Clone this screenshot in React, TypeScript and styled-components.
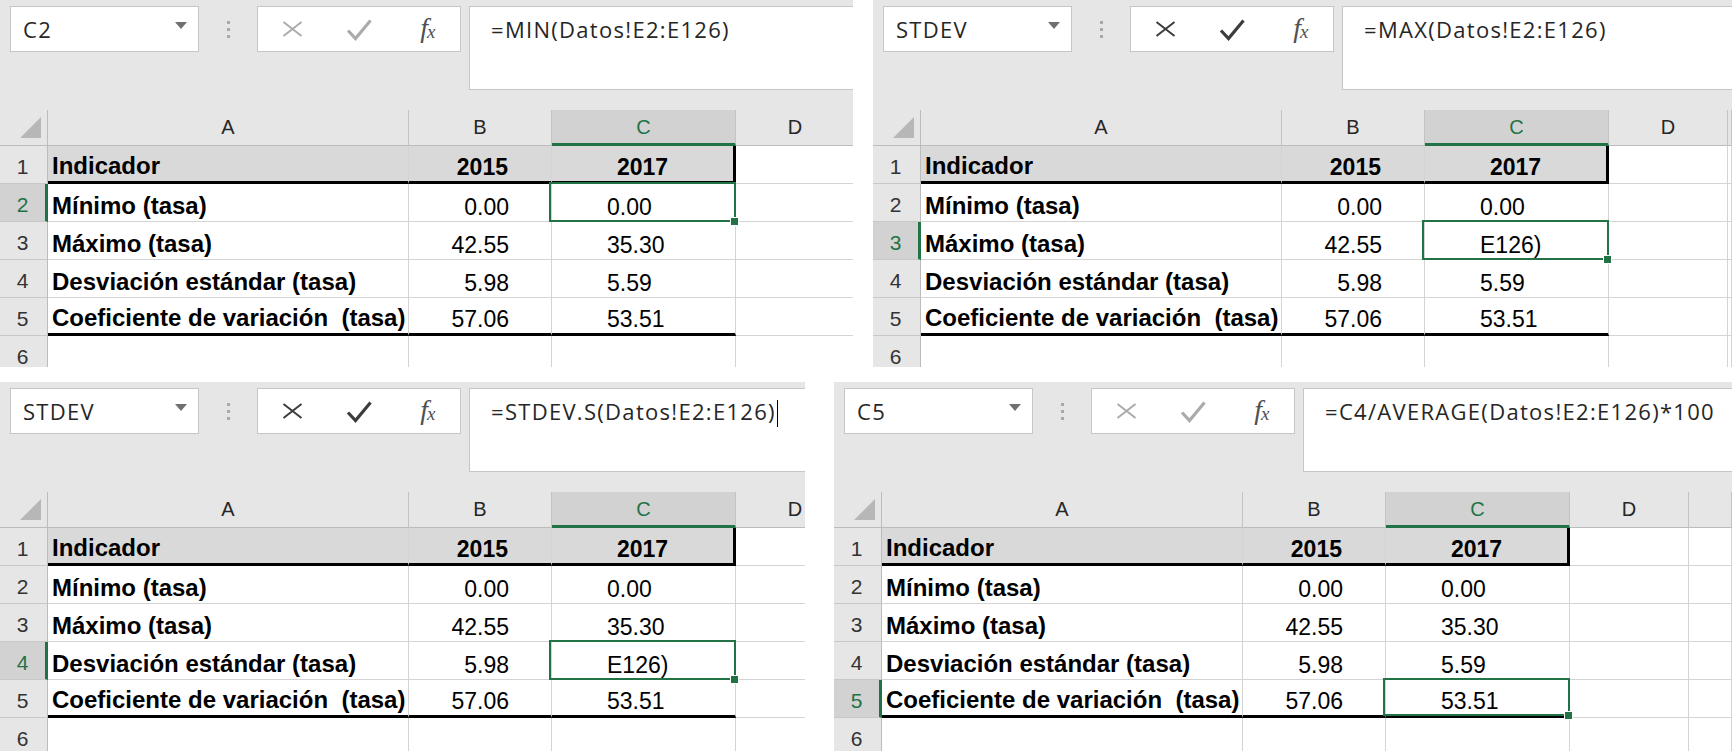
import React from 'react';
import styled, { createGlobalStyle } from 'styled-components';

const GREEN = '#217346';

const GlobalStyle = createGlobalStyle`
  html, body { margin: 0; padding: 0; background: #ffffff; }
  body { width: 1732px; height: 751px; overflow: hidden; font-family: "Liberation Sans", Arial, sans-serif; }
  * { box-sizing: border-box; }
`;

const Page = styled.div`
  display: flex;
  flex-direction: column;
  gap: 15px;
  width: 1732px;
  height: 751px;
  background: #fff;
`;

const PanelRow = styled.div<{ $height: number; $gap: number }>`
  display: flex;
  gap: ${(p) => p.$gap}px;
  height: ${(p) => p.$height}px;
  flex: none;
`;

const Panel = styled.section<{ $width?: number }>`
  ${(p) => (p.$width ? `width: ${p.$width}px; flex: none;` : 'flex: 1; min-width: 0;')}
  height: 100%;
  overflow: hidden;
  background: #e6e6e6;
  display: flex;
  flex-direction: column;
`;

/* ---------- formula bar ---------- */

const Toolbar = styled.div`
  display: flex;
  align-items: flex-start;
  height: 110px;
  flex: none;
  padding: 6px 0 20px 10px;
  font-family: "Open Sans", "Noto Sans", sans-serif;
  font-size: 22px;
  letter-spacing: 1.3px;
  color: #262626;
`;

const NameBox = styled.div`
  width: 189px;
  height: 46px;
  flex: none;
  background: #fff;
  border: 1px solid #c6c6c6;
  display: flex;
  align-items: center;
  justify-content: space-between;
  padding: 0 11px 1px 12px;
  white-space: nowrap;
`;

const DropArrow = styled.span`
  width: 0;
  height: 0;
  border-left: 6px solid transparent;
  border-right: 6px solid transparent;
  border-top: 7px solid #707070;
  margin-bottom: 6px;
`;

const Grip = styled.div`
  width: 58px;
  flex: none;
  display: flex;
  flex-direction: column;
  align-items: center;
  gap: 4px;
  padding-top: 15px;
`;

const GripDot = styled.span`
  width: 3px;
  height: 3px;
  background: #a9a9a9;
`;

const ButtonBox = styled.div`
  width: 204px;
  height: 46px;
  flex: none;
  background: #fff;
  border: 1px solid #c6c6c6;
  display: grid;
  grid-template-columns: repeat(3, 1fr);
  align-items: center;
  justify-items: center;
`;

const FxGlyph = styled.span`
  font-family: "Liberation Serif", "DejaVu Serif", serif;
  font-style: italic;
  font-size: 28px;
  letter-spacing: -1px;
  color: #505050;
  line-height: 1;
  margin-left: 2px;
  margin-top: -2px;
  & > span {
    font-size: 19px;
    vertical-align: -1px;
  }
`;

const FormulaBox = styled.div`
  flex: 1;
  min-width: 0;
  height: 84px;
  margin-left: 8px;
  background: #fff;
  border: 1px solid #c6c6c6;
  border-right: none;
  padding: 7px 0 0 21px;
  white-space: pre;
  overflow: hidden;
`;

const Caret = styled.span`
  display: inline-block;
  width: 1px;
  height: 27px;
  background: #000;
  vertical-align: -7px;
  margin-left: 1px;
`;

/* ---------- sheet ---------- */

const Sheet = styled.div`
  display: grid;
  grid-template-columns: 48px 361px 143px 184px 119px minmax(0, 1fr);
  grid-template-rows: 36px repeat(6, 38px);
  background: #fff;
  font-family: "Liberation Sans", Arial, sans-serif;
  color: #000;
`;

const Corner = styled.div`
  background: #e6e6e6;
  border-right: 1px solid #bcbcbc;
  border-bottom: 1px solid #bcbcbc;
  display: flex;
  justify-content: flex-end;
  align-items: flex-end;
  padding: 0 6px 7px 0;
`;

const ColHead = styled.div<{ $selected?: boolean }>`
  background: ${(p) => (p.$selected ? '#d2d2d2' : '#e6e6e6')};
  color: ${(p) => (p.$selected ? GREEN : '#262626')};
  border-right: 1px solid #c3c3c3;
  border-bottom: ${(p) => (p.$selected ? `3px solid ${GREEN}` : '1px solid #bcbcbc')};
  display: flex;
  align-items: center;
  justify-content: center;
  font-size: 20px;
  padding-top: ${(p) => (p.$selected ? '2px' : '0')};
  overflow: hidden;
`;

const RowHead = styled.div<{ $selected?: boolean }>`
  background: ${(p) => (p.$selected ? '#d2d2d2' : '#e6e6e6')};
  color: ${(p) => (p.$selected ? GREEN : '#333')};
  border-bottom: 1px solid #c8c8c8;
  border-right: ${(p) => (p.$selected ? `3px solid ${GREEN}` : '1px solid #bcbcbc')};
  display: flex;
  align-items: center;
  justify-content: center;
  padding: 4px ${(p) => (p.$selected ? '0' : '2px')} 0 0;
  font-size: 21px;
`;

type Align = 'start' | 'end' | 'center';

const Cell = styled.div<{
  $align?: Align;
  $bold?: boolean;
  $fill?: boolean;
  $thickBottom?: boolean;
  $thickRight?: boolean;
  $padLeft?: number;
  $padRight?: number;
  $size?: number;
}>`
  position: relative;
  background: ${(p) => (p.$fill ? '#d9d9d9' : '#fff')};
  border-right: ${(p) => (p.$thickRight ? '3px solid #000' : '1px solid #d4d4d4')};
  border-bottom: ${(p) => (p.$thickBottom ? '3px solid #000' : '1px solid #d4d4d4')};
  display: flex;
  align-items: flex-end;
  justify-content: ${(p) => (p.$align === 'end' ? 'flex-end' : p.$align === 'center' ? 'center' : 'flex-start')};
  padding: 0 ${(p) => p.$padRight ?? 0}px 1px ${(p) => p.$padLeft ?? 0}px;
  font-size: ${(p) => p.$size ?? 23}px;
  font-weight: ${(p) => (p.$bold ? 700 : 400)};
  line-height: 1.15;
  white-space: pre;
`;

const SelectionFrame = styled.div`
  position: absolute;
  top: -2px;
  left: -3px;
  right: -1px;
  bottom: -1px;
  border: 2px solid ${GREEN};
  z-index: 2;
  pointer-events: none;
`;

const FillHandle = styled.div`
  position: absolute;
  right: -4px;
  bottom: -5px;
  width: 9px;
  height: 9px;
  background: ${GREEN};
  border: 1px solid #fff;
  z-index: 3;
`;

/* ---------- icons ---------- */

const CancelIcon = ({ color }: { color: string }) => (
  <svg width="21" height="16" viewBox="0 0 21 16" style={{ marginLeft: 2 }}>
    <path d="M1.5 1 L19.5 15 M19.5 1 L1.5 15" stroke={color} strokeWidth="2" fill="none" />
  </svg>
);

const EnterIcon = ({ color }: { color: string }) => (
  <svg width="26" height="22" viewBox="0 0 26 22" style={{ marginTop: 2 }}>
    <path d="M2 11.5 L9.5 19.5 L24.5 1.5" stroke={color} strokeWidth="3.2" fill="none" strokeLinejoin="miter" />
  </svg>
);

const CornerMark = () => (
  <svg width="21" height="21" viewBox="0 0 21 21">
    <polygon points="21,0 21,21 0,21" fill="#b7b7b7" />
  </svg>
);

/* ---------- data ---------- */

type RowData = { label: string; b: string; c: string };

const HEADER = { label: 'Indicador', b: '2015', c: '2017' };
const ROWS: RowData[] = [
  { label: 'Mínimo (tasa)', b: '0.00', c: '0.00' },
  { label: 'Máximo (tasa)', b: '42.55', c: '35.30' },
  { label: 'Desviación estándar (tasa)', b: '5.98', c: '5.59' },
  { label: 'Coeficiente de variación  (tasa)', b: '57.06', c: '53.51' },
];

type PanelSpec = {
  name: string;
  formula: string;
  selectedRow: number;
  editing: boolean;
  caret?: boolean;
  width?: number;
};

const ExcelPanel = ({ spec }: { spec: PanelSpec }) => {
  const iconColor = spec.editing ? '#3c3c3c' : '#ababab';
  return (
    <Panel $width={spec.width}>
      <Toolbar>
        <NameBox>
          <span>{spec.name}</span>
          <DropArrow />
        </NameBox>
        <Grip>
          <GripDot />
          <GripDot />
          <GripDot />
        </Grip>
        <ButtonBox>
          <CancelIcon color={iconColor} />
          <EnterIcon color={iconColor} />
          <FxGlyph>
            f<span>x</span>
          </FxGlyph>
        </ButtonBox>
        <FormulaBox>
          {spec.formula}
          {spec.caret && <Caret />}
        </FormulaBox>
      </Toolbar>
      <Sheet>
        <Corner>
          <CornerMark />
        </Corner>
        <ColHead>A</ColHead>
        <ColHead>B</ColHead>
        <ColHead $selected>C</ColHead>
        <ColHead>D</ColHead>
        <ColHead />

        <RowHead $selected={spec.selectedRow === 1}>1</RowHead>
        <Cell $fill $bold $thickBottom $padLeft={4} $size={24}>
          {HEADER.label}
        </Cell>
        <Cell $fill $bold $thickBottom $align="end" $padRight={43}>
          {HEADER.b}
        </Cell>
        <Cell $fill $bold $thickBottom $thickRight $align="center">
          {HEADER.c}
        </Cell>
        <Cell />
        <Cell />

        {ROWS.map((r, i) => {
          const rowNo = i + 2;
          const selected = spec.selectedRow === rowNo;
          const last = i === ROWS.length - 1;
          return (
            <React.Fragment key={rowNo}>
              <RowHead $selected={selected}>{rowNo}</RowHead>
              <Cell $bold $thickBottom={last} $padLeft={4} $size={24}>
                {r.label}
              </Cell>
              <Cell $thickBottom={last} $align="end" $padRight={42}>
                {r.b}
              </Cell>
              <Cell $thickBottom={last} $padLeft={55}>
                {selected && spec.editing ? 'E126)' : r.c}
                {selected && (
                  <>
                    <SelectionFrame />
                    <FillHandle />
                  </>
                )}
              </Cell>
              <Cell />
              <Cell />
            </React.Fragment>
          );
        })}

        <RowHead>6</RowHead>
        <Cell />
        <Cell />
        <Cell />
        <Cell />
        <Cell />
      </Sheet>
    </Panel>
  );
};

const PANELS: PanelSpec[] = [
  { name: 'C2', formula: '=MIN(Datos!E2:E126)', selectedRow: 2, editing: false, width: 853 },
  { name: 'STDEV', formula: '=MAX(Datos!E2:E126)', selectedRow: 3, editing: true },
  { name: 'STDEV', formula: '=STDEV.S(Datos!E2:E126)', selectedRow: 4, editing: true, caret: true, width: 805 },
  { name: 'C5', formula: '=C4/AVERAGE(Datos!E2:E126)*100', selectedRow: 5, editing: false },
];

export default function App() {
  return (
    <>
      <GlobalStyle />
      <Page>
        <PanelRow $height={367} $gap={20}>
          <ExcelPanel spec={PANELS[0]} />
          <ExcelPanel spec={PANELS[1]} />
        </PanelRow>
        <PanelRow $height={369} $gap={29}>
          <ExcelPanel spec={PANELS[2]} />
          <ExcelPanel spec={PANELS[3]} />
        </PanelRow>
      </Page>
    </>
  );
}
